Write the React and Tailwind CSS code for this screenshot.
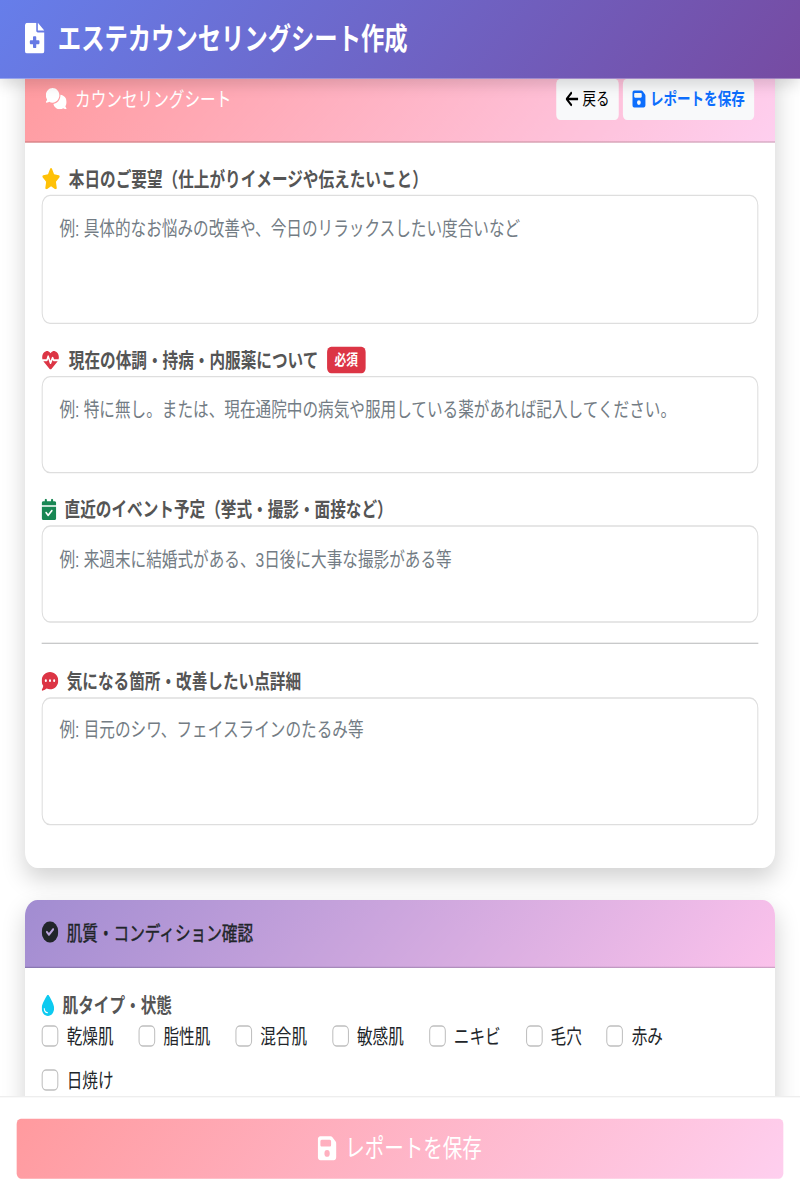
import React, { useState } from 'react'
import {
  FaArrowLeft,
  FaCalendarCheck,
  FaCommentDots,
  FaComments,
  FaDroplet,
  FaFloppyDisk,
  FaHeartPulse,
  FaStar,
} from 'react-icons/fa6'

const skinTypes = ['乾燥肌', '脂性肌', '混合肌', '敏感肌', 'ニキビ', '毛穴', '赤み', '日焼け']

const FileMedicalIcon = ({ className }) => (
  <svg viewBox="0 0 384 512" preserveAspectRatio="none" fill="currentColor" className={className}>
    <path d="M256 0v128h128L256 0zM224 128L224 0H48C21.49 0 0 21.49 0 48v416C0 490.5 21.49 512 48 512h288c26.51 0 48-21.49 48-48V160h-127.1C238.3 160 224 145.7 224 128zM288 301.7v36.57C288 345.9 281.9 352 274.3 352L224 351.1v50.29C224 409.9 217.9 416 210.3 416H173.7C166.1 416 160 409.9 160 402.3V351.1L109.7 352C102.1 352 96 345.9 96 338.3V301.7C96 294.1 102.1 288 109.7 288H160V237.7C160 230.1 166.1 224 173.7 224h36.57C217.9 224 224 230.1 224 237.7V288h50.29C281.9 288 288 294.1 288 301.7z" />
  </svg>
)

const CircleCheckIcon = ({ className }) => (
  <svg viewBox="0 0 512 512" className={className}>
    <circle cx="256" cy="256" r="256" fill="currentColor" />
    <path
      d="M160 256l64 64 128-128"
      fill="none"
      stroke="#b9a3dc"
      strokeWidth="56"
      strokeLinecap="round"
      strokeLinejoin="round"
    />
  </svg>
)

const Label = ({ icon, children }) => (
  <div className="flex h-6 items-center font-bold text-[#555]">
    {icon}
    <span className="pt-[1.5px]">{children}</span>
  </div>
)

const Field = ({ icon, label, badge, placeholder, tall }) => (
  <div>
    <div className="flex items-center">
      <Label icon={icon}>{label}</Label>
      {badge && (
        <span className="ml-2 flex h-[19.5px] items-center rounded bg-[#dc3545] px-[7.5px] pb-px text-[11.25px] font-bold text-white">
          {badge}
        </span>
      )}
    </div>
    <textarea
      placeholder={placeholder}
      className={`block w-full resize-none rounded-lg border border-[#dedede] bg-white px-4 pt-[12.5px] leading-6 placeholder:text-[#737c84] ${tall ? 'h-[96.5px]' : 'h-[72.5px]'}`}
    />
  </div>
)

const App = () => {
  const [selected, setSelected] = useState([])

  const toggle = (type) => {
    setSelected((prev) => (prev.includes(type) ? prev.filter((t) => t !== type) : [...prev, type]))
  }

  return (
    <div className="h-[1200px] w-[800px] overflow-hidden bg-white">
      <div className="flex h-[900px] w-[768px] origin-top-left scale-x-[1.041667] scale-y-[1.333333] flex-col bg-white font-['Liberation_Sans','Noto_Sans_CJK_JP',sans-serif] text-[15px] leading-6 text-[#212529]">
        <header className="z-10 flex h-[58.5px] shrink-0 items-center bg-[linear-gradient(135deg,#667eea_0%,#764ba2_100%)] px-6 text-white shadow-[0_4px_12px_rgba(0,0,0,0.15)]">
          <FileMedicalIcon className="mr-[13px] mb-[2px] h-[23.5px] w-[18.5px]" />
          <h1 className="pt-px text-[22.4px] font-bold">エステカウンセリングシート作成</h1>
        </header>

        <main className="min-h-0 flex-1 overflow-hidden px-6">
          <section className="-mt-[15px] h-[607.25px] overflow-hidden rounded-xl bg-white shadow-[0_8px_20px_rgba(0,0,0,0.18)]">
            <div className="flex h-[63px] items-center justify-between border-b border-black/15 bg-[linear-gradient(135deg,#ff9a9e_0%,#fecfef_100%)] px-5">
              <h2 className="flex items-center text-white">
                <FaComments className="mr-2 mb-px h-4 w-5" />
                カウンセリングシート
              </h2>
              <div className="flex gap-1">
                <button className="flex h-[30.5px] w-[60.5px] items-center justify-center gap-1 rounded bg-[#f8f9fa] text-[13px] text-black">
                  <FaArrowLeft className="mb-px h-[14.5px] w-[12.5px]" />
                  戻る
                </button>
                <button className="flex h-[30.5px] w-[125.8px] items-center justify-center gap-1 rounded bg-[#f8f9fa] text-[13px] font-bold text-[#0d6efd]">
                  <FaFloppyDisk className="mb-px h-[14.5px] w-[12.7px]" />
                  レポートを保存
                </button>
              </div>
            </div>
            <div className="flex flex-col gap-[15.6px] px-4 pt-[15.5px]">
              <Field
                icon={<FaStar className="mr-2 h-4 w-[18px] text-[#ffc107]" />}
                label="本日のご要望（仕上がりイメージや伝えたいこと）"
                placeholder="例: 具体的なお悩みの改善や、今日のリラックスしたい度合いなど"
                tall
              />
              <Field
                icon={<FaHeartPulse className="mr-[9px] h-4 w-[17px] text-[#dc3545]" />}
                label="現在の体調・持病・内服薬について"
                badge="必須"
                placeholder="例: 特に無し。または、現在通院中の病気や服用している薬があれば記入してください。"
              />
              <Field
                icon={<FaCalendarCheck className="mr-2 h-4 w-[14px] text-[#198754]" />}
                label="直近のイベント予定（挙式・撮影・面接など）"
                placeholder="例: 来週末に結婚式がある、3日後に大事な撮影がある等"
              />
              <hr className="border-t border-[#c8c9ca]" />
              <Field
                icon={<FaCommentDots className="mr-2 h-4 w-4 text-[#dc3545]" />}
                label="気になる箇所・改善したい点詳細"
                placeholder="例: 目元のシワ、フェイスラインのたるみ等"
                tall
              />
            </div>
          </section>

          <section className="mt-6 h-[260px] overflow-hidden rounded-xl bg-white shadow-[0_8px_20px_rgba(0,0,0,0.18)]">
            <div className="flex h-[51px] items-center border-b border-black/15 bg-[linear-gradient(135deg,#a18cd1_0%,#fbc2eb_100%)] px-4">
              <CircleCheckIcon className="mr-2 mb-px h-4 w-4" />
              <h2 className="pt-[1.5px] [-webkit-text-stroke:0.3px]">肌質・コンディション確認</h2>
            </div>
            <div className="p-4">
              <Label icon={<FaDroplet className="mr-2 h-4 w-3 text-[#0dcaf0]" />}>肌タイプ・状態</Label>
              <div className="flex flex-wrap gap-x-[23.9px] gap-y-[9.5px]">
                {skinTypes.map((type) => (
                  <label key={type} className="flex h-6 items-center gap-2">
                    <input
                      type="checkbox"
                      checked={selected.includes(type)}
                      onChange={() => toggle(type)}
                      className="mb-[2px] h-4 w-4 appearance-none rounded border border-[#bfbfbf] bg-white checked:bg-[#0d6efd]"
                    />
                    {type}
                  </label>
                ))}
              </div>
            </div>
          </section>
        </main>

        <footer className="z-10 h-[78px] shrink-0 border-t border-[#eee] bg-white px-4 pt-4">
          <button className="flex h-[45px] w-full items-center justify-center gap-2 rounded bg-[linear-gradient(135deg,#ff9a9e_0%,#fecfef_100%)] text-[18.75px] text-white">
            <FaFloppyDisk className="mb-px h-[20.5px] w-[18px]" />
            <span className="pt-px">レポートを保存</span>
          </button>
        </footer>
      </div>
    </div>
  )
}

export default App
